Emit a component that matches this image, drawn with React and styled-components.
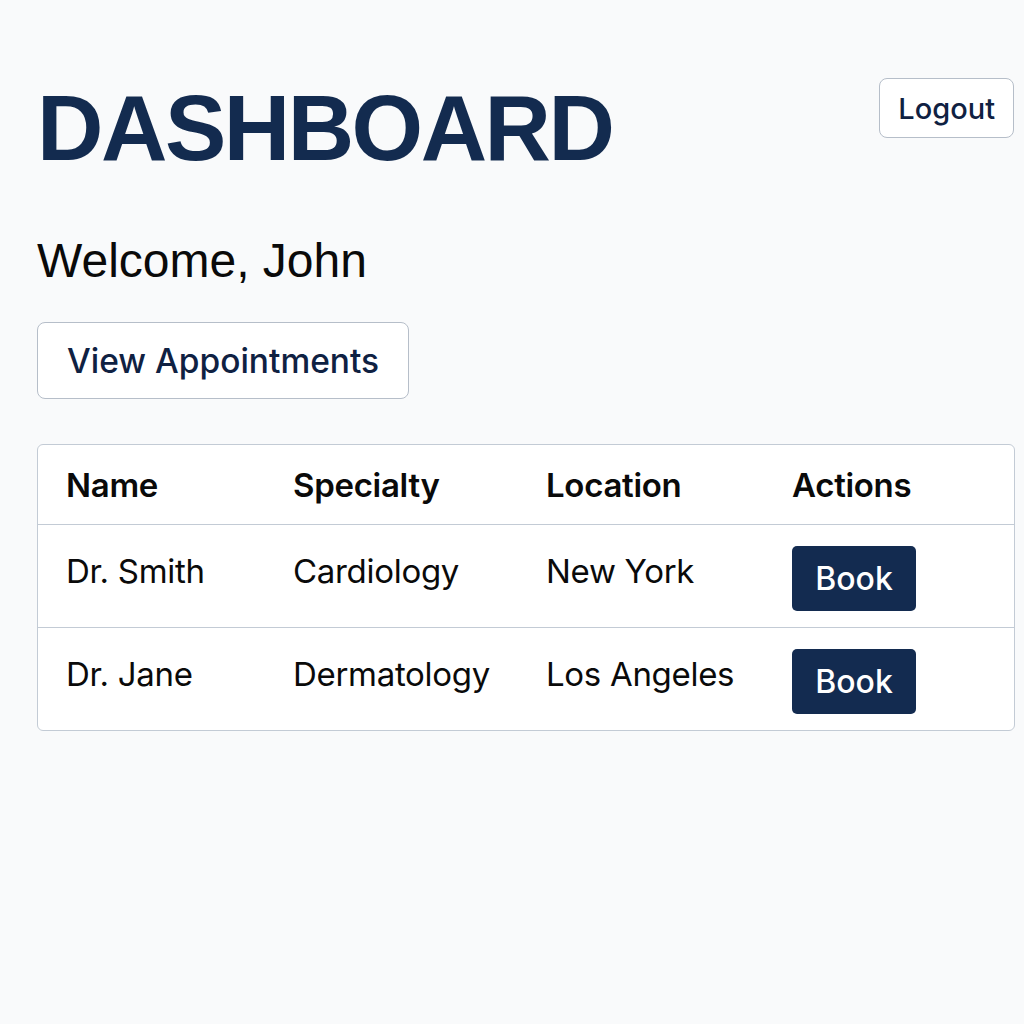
import React from 'react'
import styled, { createGlobalStyle } from 'styled-components'

const GlobalStyle = createGlobalStyle`
  body {
    margin: 0;
    background: #f9fafb;
    font-family: Inter, "Liberation Sans", Arial, sans-serif;
    color: #0b0b0b;
  }
`;

const Page = styled.div`
  padding: 78px 10px 0 37px;
`;

const Header = styled.div`
  display: flex;
  justify-content: space-between;
  align-items: flex-start;
`;

const Title = styled.h1`
  margin: 0;
  padding-top: 2px;
  font-family: "Liberation Sans", Arial, sans-serif;
  font-size: 92px;
  font-weight: 700;
  line-height: 96px;
  letter-spacing: -2.5px;
  color: #132b4f;
`;

const Welcome = styled.h2`
  margin: 57px 0 0;
  font-family: "Liberation Sans", Arial, sans-serif;
  font-size: 48px;
  font-weight: 400;
  line-height: 56px;
  color: #0a0a0a;
`;

const OutlineButton = styled.button`
  box-sizing: border-box;
  height: ${p => p.$height}px;
  padding: 0 ${p => p.$pad}px;
  font-family: Inter, "Liberation Sans", Arial, sans-serif;
  font-size: ${p => p.$size}px;
  font-weight: 500;
  color: #0f2142;
  background: #fff;
  border: 1.5px solid #b6bec9;
  border-radius: 8px;
  cursor: pointer;
`;

const ActionRow = styled.div`
  margin-top: 33px;
`;

const Table = styled.table`
  margin-top: 45px;
  width: 978px;
  border-collapse: separate;
  border-spacing: 0;
  background: #fff;
  border: 1.5px solid #c3cbd5;
  border-radius: 6px;
  overflow: hidden;
`;

const Th = styled.th`
  height: 79px;
  padding: 0 0 0 28px;
  text-align: left;
  font-size: 33px;
  font-weight: 600;
  letter-spacing: -0.3px;
  color: #0a0a0a;
  border-bottom: 1.5px solid #c3cbd5;
  width: ${p => p.$w || 'auto'};
`;

const Td = styled.td`
  height: 102px;
  padding: 0 0 0 28px;
  font-size: 33px;
  font-weight: 400;
  letter-spacing: -0.3px;
  color: #0a0a0a;
  vertical-align: middle;
  border-bottom: ${p => (p.$last ? 'none' : '1.5px solid #c3cbd5')};
`;

const CellText = styled.span`
  position: relative;
  top: -5px;
`;

const BookButton = styled.button`
  width: 124px;
  height: 65px;
  margin-top: 4px;
  font-family: Inter, "Liberation Sans", Arial, sans-serif;
  font-size: 32px;
  font-weight: 500;
  color: #fff;
  background: #132b50;
  border: none;
  border-radius: 5px;
  cursor: pointer;
`;

const doctors = [
  { name: 'Dr. Smith', specialty: 'Cardiology', location: 'New York' },
  { name: 'Dr. Jane', specialty: 'Dermatology', location: 'Los Angeles' },
]

const App = () => {
  return (
    <Page>
      <GlobalStyle />
      <Header>
        <Title>DASHBOARD</Title>
        <OutlineButton $height={60} $pad={18} $size={29}>Logout</OutlineButton>
      </Header>
      <Welcome>Welcome, John</Welcome>
      <ActionRow>
        <OutlineButton $height={77} $pad={29} $size={33.5}>View Appointments</OutlineButton>
      </ActionRow>
      <Table>
        <thead>
          <tr>
            <Th $w="199px">Name</Th>
            <Th $w="225px">Specialty</Th>
            <Th $w="218px">Location</Th>
            <Th>Actions</Th>
          </tr>
        </thead>
        <tbody>
          {doctors.map((doc, i) => (
            <tr key={doc.name}>
              <Td $last={i === doctors.length - 1}><CellText>{doc.name}</CellText></Td>
              <Td $last={i === doctors.length - 1}><CellText>{doc.specialty}</CellText></Td>
              <Td $last={i === doctors.length - 1}><CellText>{doc.location}</CellText></Td>
              <Td $last={i === doctors.length - 1}><BookButton>Book</BookButton></Td>
            </tr>
          ))}
        </tbody>
      </Table>
    </Page>
  )
}

export default App
